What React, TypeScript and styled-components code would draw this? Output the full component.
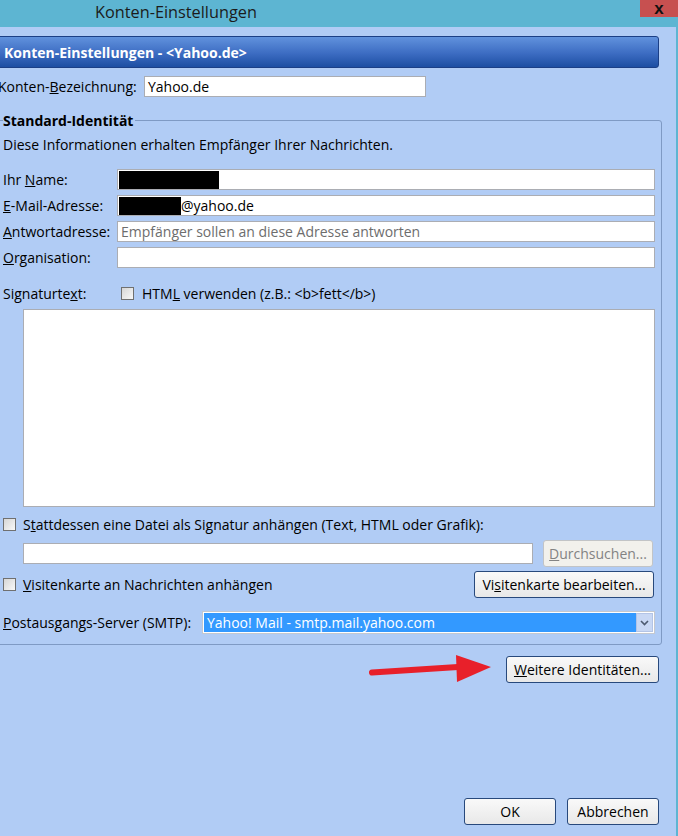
import React from 'react';
import styled, { createGlobalStyle } from 'styled-components';

const GlobalStyle = createGlobalStyle`
  html, body {
    margin: 0;
    padding: 0;
  }
  body {
    font-family: 'Open Sans', 'Noto Sans', sans-serif;
    font-size: 14px;
    color: #000;
  }
`;

const Window = styled.div`
  position: relative;
  width: 678px;
  height: 836px;
  overflow: hidden;
  background: #5db5d2;
  display: flex;
  flex-direction: column;
`;

const TitleBar = styled.div`
  height: 27px;
  display: flex;
  align-items: flex-start;
  justify-content: space-between;
`;

const TitleText = styled.div`
  padding-left: 95px;
  line-height: 24px;
  font-size: 16.3px;
  color: #1b1b1b;
`;

const CloseButton = styled.div`
  width: 38px;
  height: 17px;
  background: #c75050;
  display: flex;
  align-items: center;
  justify-content: center;
  font-family: 'Liberation Sans', sans-serif;
  font-weight: bold;
  font-size: 17px;
  line-height: 17px;
  color: #111;
`;

const Body = styled.div`
  flex: 1;
  margin-right: 2px;
  background: #b1ccf5;
  display: flex;
  flex-direction: column;
  padding: 9px 17px 11px 0;
`;

const Banner = styled.div`
  height: 32px;
  box-sizing: border-box;
  margin-left: -2px;
  border: 1px solid #1b3f86;
  border-radius: 0 3px 3px 0;
  background: linear-gradient(#6192dd, #3c6cc2 55%, #1d4ea2);
  color: #fff;
  font-weight: bold;
  font-size: 14px;
  display: flex;
  align-items: center;
  padding-left: 5px;
`;

const AccountRow = styled.div`
  display: flex;
  align-items: center;
  margin-top: 8px;
`;

const Label = styled.div<{ $width?: number }>`
  width: ${(p) => (p.$width ? `${p.$width}px` : 'auto')};
  flex-shrink: 0;
  white-space: nowrap;
  line-height: 19px;
`;

const Key = styled.span`
  text-decoration: underline;
`;

const Field = styled.div<{ $width?: number; $muted?: boolean }>`
  height: 21px;
  box-sizing: border-box;
  ${(p) => (p.$width ? `width: ${p.$width}px;` : 'flex: 1;')}
  border: 1px solid #abadb3;
  background: #fff;
  display: flex;
  align-items: center;
  padding: 0 3px;
  white-space: nowrap;
  color: ${(p) => (p.$muted ? '#6d6d6d' : '#000')};
`;

const Redacted = styled.span<{ $w: number }>`
  display: inline-block;
  width: ${(p) => p.$w}px;
  height: 18px;
  background: #000;
  margin-left: -2px;
`;

const Group = styled.fieldset`
  margin: 14px -3px 0 -4px;
  border: 1px solid #7f9ac4;
  border-radius: 3px;
  padding: 0 6px 10px 6px;
`;

const Legend = styled.legend`
  padding: 0 2px 0 0;
  font-weight: bold;
  line-height: 19px;
`;

const Intro = styled.div`
  margin-top: 5px;
  line-height: 19px;
`;

const FormGrid = styled.div`
  margin-top: 15px;
  display: grid;
  grid-template-columns: 114px 1fr;
  grid-auto-rows: 21px;
  row-gap: 5px;
  align-items: center;
`;

const Row = styled.div<{ $top: number; $indent?: number }>`
  display: flex;
  align-items: center;
  margin-top: ${(p) => p.$top}px;
  margin-left: ${(p) => p.$indent || 0}px;
`;

const Check = styled.span`
  width: 13px;
  height: 13px;
  box-sizing: border-box;
  border: 1px solid #707070;
  background: linear-gradient(135deg, #d6d6d6, #f8f8f8);
  flex-shrink: 0;
  margin-right: 8px;
`;

const TextArea = styled.div`
  margin: 6px 0 0 20px;
  height: 198px;
  box-sizing: border-box;
  border: 1px solid #abadb3;
  background: #fff;
`;

const Button = styled.div<{ $width: number; $disabled?: boolean }>`
  width: ${(p) => p.$width}px;
  height: 27px;
  box-sizing: border-box;
  flex-shrink: 0;
  border: 1px solid ${(p) => (p.$disabled ? '#c2c4c6' : '#28497c')};
  border-radius: 3px;
  background: ${(p) =>
    p.$disabled ? '#f2f1ec' : 'linear-gradient(#f9f9f9, #e8e8e8)'};
  color: ${(p) => (p.$disabled ? '#838383' : '#000')};
  display: flex;
  align-items: center;
  justify-content: center;
  white-space: nowrap;
`;

const Spacer = styled.div<{ $w: number }>`
  width: ${(p) => p.$w}px;
  flex-shrink: 0;
`;

const Select = styled.div`
  width: 453px;
  height: 23px;
  box-sizing: border-box;
  border: 1px solid #c4c8cf;
  background: #fff;
  padding: 1px;
  display: flex;
`;

const SelectValue = styled.div`
  flex: 1;
  background: #3399ff;
  color: #fff;
  padding-left: 3px;
  line-height: 19px;
  white-space: nowrap;
`;

const SelectArrow = styled.div`
  width: 17px;
  background: #c9d8f4;
  border: 1px solid #b3c4e6;
  box-sizing: border-box;
  display: flex;
  align-items: center;
  justify-content: center;
`;

const ActionRow = styled.div`
  display: flex;
  justify-content: flex-end;
  margin-top: 11px;
`;

const Filler = styled.div`
  flex: 1;
`;

const Footer = styled.div`
  display: flex;
  justify-content: flex-end;
  gap: 11px;
`;

const Arrow = styled.svg`
  position: absolute;
  left: 366px;
  top: 650px;
`;

export default function App() {
  return (
    <>
      <GlobalStyle />
      <Window>
        <TitleBar>
          <TitleText>Konten-Einstellungen</TitleText>
          <CloseButton>x</CloseButton>
        </TitleBar>
        <Body>
          <Banner>Konten-Einstellungen - &lt;Yahoo.de&gt;</Banner>
          <AccountRow>
            <Label $width={146} style={{ marginLeft: -2 }}>
              Konten-<Key>B</Key>ezeichnung:
            </Label>
            <Field $width={282}>Yahoo.de</Field>
          </AccountRow>

          <Group>
            <Legend>Standard-Identität</Legend>
            <Intro>Diese Informationen erhalten Empfänger Ihrer Nachrichten.</Intro>
            <FormGrid>
              <Label>
                Ihr <Key>N</Key>ame:
              </Label>
              <Field>
                <Redacted $w={100} />
              </Field>
              <Label>
                <Key>E</Key>-Mail-Adresse:
              </Label>
              <Field>
                <Redacted $w={62} />
                @yahoo.de
              </Field>
              <Label>
                <Key>A</Key>ntwortadresse:
              </Label>
              <Field $muted>Empfänger sollen an diese Adresse antworten</Field>
              <Label>
                <Key>O</Key>rganisation:
              </Label>
              <Field />
            </FormGrid>

            <Row $top={16}>
              <Label $width={118}>
                Signaturte<Key>x</Key>t:
              </Label>
              <Check />
              <span>
                HTM<Key>L</Key> verwenden (z.B.: &lt;b&gt;fett&lt;/b&gt;)
              </span>
            </Row>
            <TextArea />

            <Row $top={8}>
              <Check style={{ marginRight: 7 }} />
              <span>
                S<Key>t</Key>attdessen eine Datei als Signatur anhängen (Text, HTML oder Grafik):
              </span>
            </Row>
            <Row $top={6} $indent={20}>
              <Field $width={510} />
              <Spacer $w={10} />
              <Button $width={110} $disabled>
                <span>
                  <Key>D</Key>urchsuchen...
                </span>
              </Button>
            </Row>
            <Row $top={4}>
              <Check style={{ marginRight: 7 }} />
              <span>
                <Key>V</Key>isitenkarte an Nachrichten anhängen
              </span>
              <Filler />
              <Button $width={180}>
                <span>
                  Vi<Key>s</Key>itenkarte bearbeiten...
                </span>
              </Button>
              <Spacer $w={1} />
            </Row>
            <Row $top={13}>
              <Label $width={199}>
                <Key>P</Key>ostausgangs-Server (SMTP):
              </Label>
              <Select>
                <SelectValue>Yahoo! Mail - smtp.mail.yahoo.com</SelectValue>
                <SelectArrow>
                  <svg width="9" height="6" viewBox="0 0 9 6">
                    <path d="M1 1 L4.5 4.5 L8 1" fill="none" stroke="#4d5a70" strokeWidth="1.6" />
                  </svg>
                </SelectArrow>
              </Select>
            </Row>
          </Group>

          <ActionRow>
            <Button $width={153}>
              <span>
                <Key>W</Key>eitere Identitäten...
              </span>
            </Button>
          </ActionRow>

          <Filler />
          <Footer>
            <Button $width={92}>OK</Button>
            <Button $width={92}>Abbrechen</Button>
          </Footer>
        </Body>
        <Arrow width="130" height="36" viewBox="0 0 130 36">
          <path d="M6 22.5 L92 17" stroke="#e8202a" strokeWidth="6" strokeLinecap="round" />
          <polygon points="90,5 125,17 91,32" fill="#e8202a" />
        </Arrow>
      </Window>
    </>
  );
}
